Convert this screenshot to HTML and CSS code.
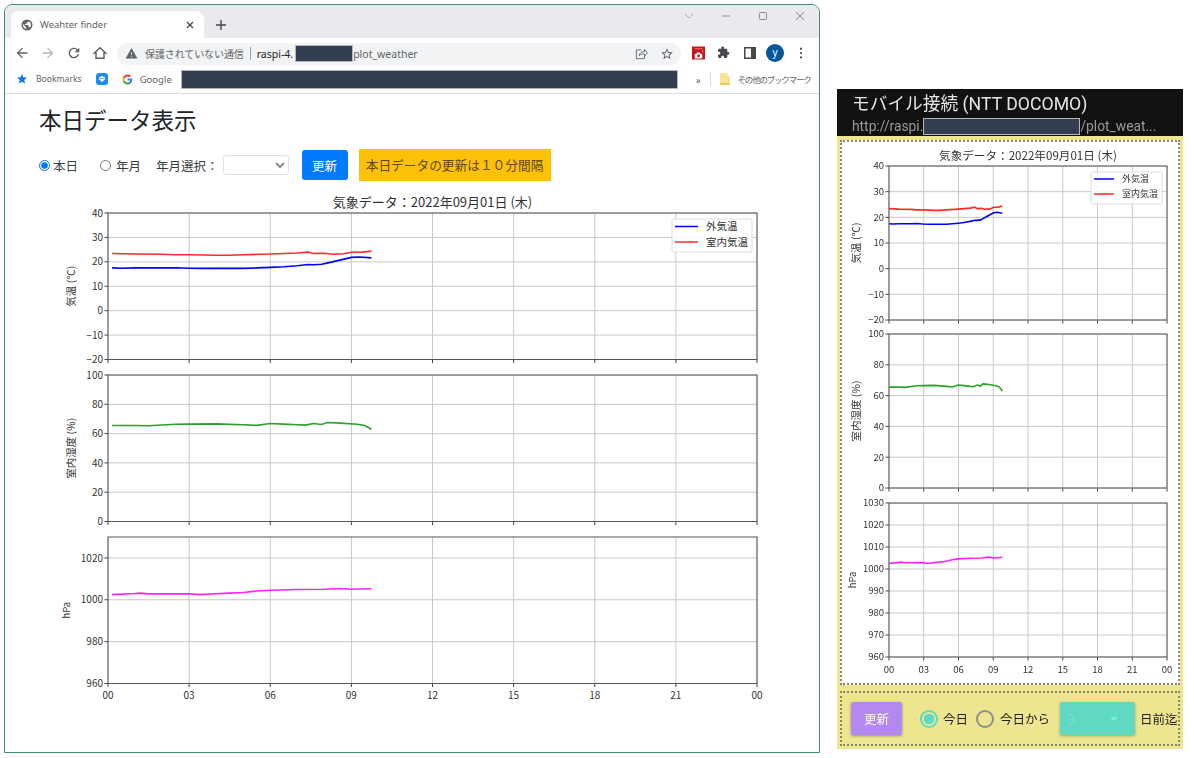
FILE: index.html
```html
<!DOCTYPE html>
<html lang="ja">
<head>
  <meta charset="UTF-8" />
  <meta name="viewport" content="width=device-width, initial-scale=1.0"/>
  <title>Weahter finder</title>
  <link rel="stylesheet" href="styles.css">
</head>
<body>
  <div class="screen">
    <div class="browser">
      <div class="tabstrip">
        <div class="tab">
          <svg class="favicon" viewBox="0 0 24 24"><path fill="#5f6368" d="M12 1a11 11 0 1 0 0 22 11 11 0 0 0 0-22zM4 12c0-.6.1-1.300.2-1.900L9 15v1c0 1.100.9 2 2 2v2c-3.900-.5-7-3.800-7-8zm13.900 5.400c-.3-.8-1-1.400-1.900-1.400h-1v-3c0-.6-.4-1-1-1H8v-2h2c.6 0 1-.4 1-1V7h2c1.100 0 2-.9 2-2v-.4c2.900 1.200 5 4 5 7.400 0 2.100-.8 4-2.100 5.400z"/></svg>
          <span class="tab-title">Weahter finder</span>
          <svg class="tab-close" viewBox="0 0 10 10"><path d="M2 2l6 6M8 2l-6 6" stroke="#45484c" stroke-width="1.300" fill="none"/></svg>
        </div>
        <svg class="new-tab" viewBox="0 0 12 12"><path d="M6 1v10M1 6h10" stroke="#45484c" stroke-width="1.400" fill="none"/></svg>
        <div class="win-controls">
          <svg viewBox="0 0 12 12"><path d="M2 4l4 4 4-4" stroke="#a8abb0" fill="none"/></svg>
          <svg viewBox="0 0 12 12"><path d="M2 6h8" stroke="#8a8d91" fill="none"/></svg>
          <svg viewBox="0 0 12 12"><rect x="2.500" y="2.500" width="7" height="7" rx="1" stroke="#8a8d91" fill="none"/></svg>
          <svg viewBox="0 0 12 12"><path d="M2 2l8 8M10 2l-8 8" stroke="#8a8d91" fill="none"/></svg>
        </div>
      </div>

      <div class="toolbar">
        <svg class="nav-icon" viewBox="0 0 24 24"><path fill="#5f6368" d="M20 11H7.830l5.590-5.590L12 4l-8 8 8 8 1.410-1.410L7.830 13H20v-2z"/></svg>
        <svg class="nav-icon" viewBox="0 0 24 24"><path fill="#b4b6b9" d="M4 11h12.170l-5.590-5.590L12 4l8 8-8 8-1.410-1.410L16.170 13H4v-2z"/></svg>
        <svg class="nav-icon" viewBox="0 0 24 24"><path fill="#5f6368" d="M17.650 6.350A7.958 7.958 0 0 0 12 4c-4.420 0-7.990 3.580-7.990 8s3.570 8 7.990 8c3.730 0 6.840-2.550 7.730-6h-2.080A5.990 5.990 0 0 1 12 18c-3.310 0-6-2.690-6-6s2.690-6 6-6c1.660 0 3.140.69 4.220 1.780L13 11h7V4l-2.350 2.350z"/></svg>
        <svg class="nav-icon" viewBox="0 0 24 24"><path fill="none" stroke="#5f6368" stroke-width="2.200" d="M12 4L3.500 12H6v8h12v-8h2.500z"/></svg>
        <div class="omnibox">
          <svg class="warn-icon" viewBox="0 0 24 24"><path fill="#5f6368" d="M1 21h22L12 2 1 21zm12-3h-2v-2h2v2zm0-4h-2v-4h2v4z"/></svg>
          <span class="not-secure">保護されていない通信</span>
          <span class="omni-sep"></span>
          <span class="host">raspi-4.</span>
          <span class="redact omni-redact"></span>
          <span class="path">plot_weather</span>
          <svg class="omni-icon omni-share" viewBox="0 0 24 24"><path fill="none" stroke="#6b6f74" stroke-width="1.700" d="M12 5H4v15h14v-5M9 15c0-5 4-7 9-7V4l5 6-5 6v-4c-4 0-7 0-9 3z"/></svg>
          <svg class="omni-icon omni-star" viewBox="0 0 24 24"><path fill="#5f6368" d="M22 9.240l-7.190-.620L12 2 9.190 8.630 2 9.240l5.460 4.730L5.820 21 12 17.270 18.180 21l-1.630-7.030L22 9.240zM12 15.400l-3.760 2.270 1-4.280-3.320-2.880 4.380-.380L12 6.100l1.710 4.040 4.380.380-3.320 2.880 1 4.280L12 15.400z"/></svg>
        </div>
        <svg class="ext-red" viewBox="0 0 14 14"><rect width="14" height="14" fill="#c3161f"/><path d="M3 2h8v1H3zM11 3h1v4h-1z" fill="#e8777c"/><path d="M3 8h1.500l1-1.500h3l1 1.500H11v5H3z" fill="#fff"/><circle cx="7" cy="10" r="1.500" fill="#c3161f"/></svg>
        <svg class="ext-piece" viewBox="0 0 24 24"><path fill="#45484c" d="M20.500 11H19V7c0-1.100-.9-2-2-2h-4V3.500C13 2.120 11.880 1 10.500 1S8 2.120 8 3.500V5H4c-1.100 0-1.990.9-1.990 2v3.800H3.500c1.490 0 2.700 1.210 2.700 2.700s-1.210 2.700-2.700 2.700H2V20c0 1.100.9 2 2 2h3.800v-1.500c0-1.490 1.210-2.700 2.700-2.700 1.490 0 2.700 1.210 2.700 2.700V22H17c1.100 0 2-.9 2-2v-4h1.500c1.380 0 2.500-1.120 2.500-2.500S21.880 11 20.500 11z"/></svg>
        <svg class="side-panel" viewBox="0 0 12 12"><rect x="0.750" y="0.750" width="10.500" height="10.500" fill="#fff" stroke="#45484c" stroke-width="1.500"/><rect x="7" y="1" width="4" height="10" fill="#45484c"/></svg>
        <div class="avatar">y</div>
        <svg class="menu-dots" viewBox="0 0 4 14"><circle cx="2" cy="2" r="1.300" fill="#45484c"/><circle cx="2" cy="7" r="1.300" fill="#45484c"/><circle cx="2" cy="12" r="1.300" fill="#45484c"/></svg>
      </div>

      <div class="bookmarks">
        <svg class="bm-star" viewBox="0 0 24 24"><path fill="#1a73e8" d="M12 17.270L18.180 21l-1.640-7.030L22 9.240l-7.190-.610L12 2 9.190 8.630 2 9.240l5.460 4.730L5.820 21z"/></svg>
        <span class="bm-text bm-first">Bookmarks</span>
        <svg class="bm-app" viewBox="0 0 12 12"><rect width="12" height="12" rx="3" fill="#1c8cf2"/><path d="M3 4.500L6 3l3 1.500v2L6 9 3 6.500z" fill="#fff"/><path d="M3.500 5.500h5" stroke="#1c8cf2" stroke-width=".7"/></svg>
        <svg class="bm-google" viewBox="0 0 24 24">
          <path fill="#4285F4" d="M22.560 12.250c0-.78-.07-1.530-.2-2.250H12v4.260h5.920c-.26 1.370-1.040 2.530-2.210 3.310v2.770h3.570c2.080-1.920 3.280-4.740 3.280-8.090z"/>
          <path fill="#34A853" d="M12 23c2.970 0 5.460-.98 7.280-2.660l-3.570-2.770c-.98.66-2.230 1.060-3.710 1.060-2.860 0-5.290-1.930-6.160-4.530H2.180v2.840C3.990 20.530 7.700 23 12 23z"/>
          <path fill="#FBBC05" d="M5.840 14.090c-.22-.66-.35-1.360-.35-2.090s.13-1.430.35-2.090V7.070H2.180C1.430 8.550 1 10.220 1 12s.43 3.450 1.180 4.930l2.850-2.220.81-.62z"/>
          <path fill="#EA4335" d="M12 5.380c1.620 0 3.060.56 4.210 1.640l3.150-3.150C17.450 2.090 14.970 1 12 1 7.700 1 3.990 3.470 2.180 7.070l3.660 2.840c.87-2.600 3.300-4.530 6.160-4.530z"/>
        </svg>
        <span class="bm-text">Google</span>
        <span class="redact bm-redact"></span>
        <span class="bm-more">»</span>
        <span class="bm-sep"></span>
        <svg class="bm-folder" viewBox="0 0 10 12"><path d="M0 1a1 1 0 0 1 1-1h5l4 4v7a1 1 0 0 1-1 1H1a1 1 0 0 1-1-1z" fill="#fde293"/><path d="M0 10h10v1a1 1 0 0 1-1 1H1a1 1 0 0 1-1-1z" fill="#f3c95c"/></svg>
        <span class="bm-text bm-other">その他のブックマーク</span>
      </div>

      <div class="page">
        <h1>本日データ表示</h1>
        <form class="controls">
          <label class="radio"><input type="radio" name="mode" checked>本日</label>
          <label class="radio radio-month"><input type="radio" name="mode">年月</label>
          <label class="month-label">年月選択：</label>
          <select class="month-select"></select>
          <button type="button" class="update-btn">更新</button>
          <div class="notice">本日データの更新は１０分間隔</div>
        </form>
        <svg id="desktopChart" class="chart chart-desktop" width="740" height="515"></svg>
      </div>
    </div>

    <div class="phone">
      <div class="phone-head">
        <div class="phone-title">モバイル接続 (NTT DOCOMO)</div>
        <div class="phone-url">http://raspi.<span class="redact url-redact"></span>/plot_weat...</div>
      </div>
      <div class="phone-body">
        <div class="phone-card">
          <svg id="mobileChart" class="chart" width="336" height="541"></svg>
        </div>
        <div class="phone-bar">
          <button type="button" class="m-btn">更新</button>
          <span class="m-radio m-radio-on"></span>
          <span class="m-label m-label-first">今日</span>
          <span class="m-radio m-radio-off"></span>
          <span class="m-label">今日から</span>
          <div class="m-select"><span>3</span><i></i></div>
          <span class="m-label m-days">日前迄</span>
        </div>
      </div>
    </div>
  </div>

  <script src="chart.js"></script>
</body>
</html>
```

FILE: styles.css
```css
* {
  box-sizing: border-box;
}

body {
  margin: 0;
  background: #fff;
  font-family: 'Noto Sans CJK JP', 'Liberation Sans', sans-serif;
  color: #212529;
}

svg {
  display: block;
  flex: none;
}

.screen {
  display: flex;
  align-items: flex-start;
  width: 1194px;
  height: 758px;
  overflow: hidden;
  filter: blur(0.35px);
}

.redact {
  display: inline-block;
  background: #333f50;
  border: 1px solid #b4b8bd;
}

/* browser window */
.browser {
  width: 816px;
  height: 749px;
  margin: 4px 0 0 4px;
  border: 1px solid #3f8a7d;
  border-radius: 8px 8px 0 0;
  overflow: hidden;
  background: #fff;
}

.tabstrip {
  display: flex;
  align-items: flex-end;
  height: 33px;
  padding-left: 6px;
  background: #e8eaed;
}

.tab {
  display: flex;
  align-items: center;
  width: 193px;
  height: 27px;
  padding: 0 9px 0 10px;
  background: #fff;
  border-radius: 8px 8px 0 0;
}

.favicon {
  width: 12px;
  height: 12px;
}

.tab-title {
  margin-left: 7px;
  font-family: 'Noto Sans', sans-serif;
  font-size: 9.500px;
  color: #5f6368;
}

.tab-close {
  width: 10px;
  height: 10px;
  margin-left: auto;
}

.new-tab {
  width: 12px;
  height: 12px;
  margin: 0 0 7px 11px;
}

.win-controls {
  display: flex;
  align-self: flex-start;
  gap: 25px;
  margin: 5px 0 0 auto;
  padding-right: 13px;
}

.win-controls svg {
  width: 12px;
  height: 12px;
}

.toolbar {
  display: flex;
  align-items: center;
  height: 29px;
  padding-left: 9px;
  gap: 10px;
}

.nav-icon {
  width: 16px;
  height: 16px;
}

.omnibox {
  display: flex;
  align-items: center;
  width: 564px;
  height: 22px;
  margin: 2px 0 0 -1px;
  padding: 0 7px 0 8px;
  background: #f1f3f4;
  border-radius: 11px;
  font-size: 10px;
  color: #5f6368;
}

.warn-icon {
  width: 13px;
  height: 13px;
}

.not-secure {
  margin-left: 7px;
  letter-spacing: -0.100px;
  white-space: nowrap;
}

.omni-sep {
  width: 1px;
  height: 13px;
  margin: 0 6px;
  background: #9aa0a6;
}

.host, .path {
  font-family: 'Noto Sans', sans-serif;
  font-size: 10.500px;
}

.host {
  color: #202124;
}

.omni-redact {
  width: 58px;
  height: 17px;
  margin-left: 2px;
}

.omni-icon {
  width: 14px;
  height: 14px;
}

.omni-share {
  margin-left: auto;
}

.omni-star {
  margin-left: 12px;
}

.ext-red {
  width: 13px;
  height: 14px;
  margin-left: 1px;
}

.ext-piece {
  width: 13px;
  height: 13px;
  margin-left: 2px;
}

.side-panel {
  width: 12px;
  height: 12px;
  margin-left: 3.500px;
}

.avatar {
  width: 18px;
  height: 18px;
  margin-left: 0.500px;
  border-radius: 50%;
  background: #01579b;
  color: #fff;
  font-family: 'Noto Sans', sans-serif;
  font-size: 10px;
  line-height: 17px;
  text-align: center;
}

.menu-dots {
  width: 4px;
  height: 12px;
  margin-left: 5px;
}

.bookmarks {
  display: flex;
  align-items: center;
  height: 27px;
  padding: 0 0 2px 11px;
  border-bottom: 1px solid #dadce0;
}

.bm-star {
  width: 12px;
  height: 12px;
}

.bm-text {
  font-family: 'Noto Sans', 'Noto Sans CJK JP', sans-serif;
  font-size: 9.500px;
  color: #5f6368;
  white-space: nowrap;
}

.bm-first {
  margin-left: 8px;
  font-size: 8.600px;
}

.bm-app {
  width: 12px;
  height: 12px;
  margin: 0 14px;
}

.bm-google {
  width: 11px;
  height: 11px;
  margin-right: 7px;
}

.bm-redact {
  width: 497px;
  height: 19px;
  margin-left: 9px;
}

.bm-more {
  margin-left: 18px;
  font-size: 10px;
  color: #45484c;
}

.bm-sep {
  width: 1px;
  height: 14px;
  margin-left: 9px;
  background: #d6d8da;
}

.bm-folder {
  width: 10px;
  height: 12px;
  margin-left: 9px;
}

.bm-other {
  margin-left: 8px;
  font-size: 8.500px;
  letter-spacing: -1.200px;
}

/* page content */
.page {
  padding: 0 0 0 34px;
}

h1 {
  margin: 0;
  padding-top: 8px;
  font-size: 22.500px;
  font-weight: 400;
  line-height: 34px;
}

.controls {
  display: flex;
  align-items: center;
  height: 32px;
  margin-top: 13px;
  font-size: 12.500px;
}

.radio {
  display: flex;
  align-items: center;
  color: #3a3f44;
}

.radio input {
  width: 11px;
  height: 11px;
  margin: 0 3px 0 0;
  accent-color: #007bff;
}

.radio-month {
  margin-left: 22px;
}

.radio-month input {
  margin-right: 5px;
}

.month-label {
  margin-left: 15px;
  color: #3a3f44;
}

.month-select {
  width: 66px;
  height: 20px;
  margin-left: 4px;
  background: #fff;
  border: 1px solid #dfe2e5;
  border-radius: 3px;
  color: #8a8d91;
}

.update-btn {
  width: 46px;
  height: 30px;
  margin-left: 13px;
  background-color: #007bff;
  border: none;
  border-radius: 3px;
  color: white;
  font-family: inherit;
  font-size: 12.500px;
}

.notice {
  width: 192px;
  height: 32px;
  margin-left: 11px;
  background: #ffc107;
  color: #5a4a12;
  font-size: 12.700px;
  line-height: 32px;
  text-align: center;
}

.chart text {
  fill: #333;
}

.chart-desktop {
  margin-top: 11px;
}

/* phone panel */
.phone {
  width: 346px;
  margin: 89px 0 0 17px;
}

.phone-head {
  height: 47px;
  padding: 2px 0 0 15px;
  background: #111;
  color: #e6e6e6;
}

.phone-title {
  font-family: Roboto, 'Noto Sans CJK JP', sans-serif;
  font-size: 17.700px;
  line-height: 26px;
  white-space: nowrap;
}

.phone-url {
  display: flex;
  align-items: center;
  font-family: Roboto, sans-serif;
  font-size: 13.800px;
  line-height: 18px;
  color: #9a9a9a;
  white-space: nowrap;
}

.url-redact {
  width: 157px;
  height: 17px;
}

.phone-body {
  height: 613px;
  padding: 4px 3px 0;
  background: #ede58f;
}

.phone-card {
  height: 545px;
  background: #fff;
  border: 2px dotted #8a8960;
}

.phone-bar {
  display: flex;
  align-items: center;
  height: 55px;
  margin-top: 6px;
  padding-left: 9px;
  border: 2px dotted #8a8960;
  font-size: 12.500px;
  white-space: nowrap;
}

.m-btn {
  width: 51px;
  height: 33px;
  background: #b388f0;
  border: none;
  border-radius: 2px;
  box-shadow: 0 1px 3px rgba(0,0,0,0.35);
  color: #fff;
  font-family: inherit;
  font-size: 12.500px;
}

.m-radio {
  width: 18px;
  height: 18px;
  border-radius: 50%;
  border: 2px solid #8f8f8f;
}

.m-radio-on {
  margin-left: 18px;
  border-color: #5fd9c4;
  background: radial-gradient(circle, #5fd9c4 0 5px, transparent 5.500px);
}

.m-radio-off {
  margin-left: 8px;
}

.m-label {
  margin-left: 6px;
  color: #222;
}

.m-label-first {
  margin-left: 5px;
}

.m-select {
  display: flex;
  align-items: center;
  justify-content: space-between;
  width: 75px;
  height: 33px;
  margin-left: 10px;
  padding: 0 17px 0 8px;
  background: #5fd9c4;
  border-radius: 2px;
  box-shadow: 0 1px 3px rgba(0,0,0,0.3);
  color: #6fe3cf;
  font-size: 14px;
}

.m-select i {
  border-left: 4px solid transparent;
  border-right: 4px solid transparent;
  border-top: 4px solid #8ae8d8;
}

.m-days {
  margin-left: 5px;
}
```

FILE: chart.js
```js
const temp = [[0.15,17.5],[0.5,17.4],[1,17.5],[2,17.5],[2.5,17.6],[3,17.4],[3.5,17.3],[5,17.3],[5.5,17.5],[6,17.7],[6.5,18],[7,18.4],[7.4,18.9],[7.6,18.8],[7.9,19],[8.1,19.5],[8.46,20.4],[9,21.8],[9.3,22],[9.74,21.6]];
const room = [[0.15,23.4],[1,23.2],[2,23.1],[2.5,22.9],[3,22.9],[4,22.7],[4.5,22.7],[5,22.9],[6,23.2],[6.5,23.4],[7,23.6],[7.4,24],[7.6,23.4],[8,23.5],[8.3,23.1],[8.7,23.3],[9,23.9],[9.4,24],[9.74,24.4]];
const humid = [[0.15,65.5],[1,65.5],[1.5,65.3],[2.5,66.4],[3,66.5],[4,66.6],[4.5,66.3],[5,66],[5.5,65.6],[6,66.9],[6.5,66.5],[7,66],[7.3,65.8],[7.6,66.9],[7.9,66.2],[8.1,67.6],[8.6,67.2],[9.2,66.4],[9.5,65.5],[9.74,63]];
const press = [[0.15,1002.5],[1,1003],[1.2,1003.2],[1.5,1002.8],[3,1002.9],[3.4,1002.5],[4,1002.9],[4.5,1003.2],[5,1003.5],[5.5,1004.2],[6,1004.6],[7,1004.9],[8,1005],[8.6,1005.4],[9,1005],[9.74,1005.3]];

const hours = ['00', '03', '06', '09', '12', '15', '18', '21', '00'];

function ticks(min, max, step) {
  const out = [];
  for (let v = min; v <= max; v += step) out.push(v);
  return out;
}

function drawPanel(c, p) {
  const bottom = p.top + p.height;
  const xPos = h => c.left + (h / 24) * (c.right - c.left);
  const yPos = v => bottom - ((v - p.min) / (p.max - p.min)) * p.height;
  let s = '';

  hours.forEach((_, i) => {
    const x = xPos(i * 3);
    s += `<line x1="${x}" x2="${x}" y1="${p.top}" y2="${bottom}" stroke="#c8c8c8"/>`;
    s += `<line x1="${x}" x2="${x}" y1="${bottom}" y2="${bottom + 3.5}" stroke="#444"/>`;
  });

  p.ticks.forEach(v => {
    const y = yPos(v);
    const label = String(v).replace('-', '−');
    s += `<line x1="${c.left}" x2="${c.right}" y1="${y}" y2="${y}" stroke="#c8c8c8"/>`;
    s += `<line x1="${c.left - 3.5}" x2="${c.left}" y1="${y}" y2="${y}" stroke="#444"/>`;
    s += `<text x="${c.left - 5}" y="${y + c.font * 0.36}" text-anchor="end" font-size="${c.font}">${label}</text>`;
  });

  p.lines.forEach(l => {
    const pts = l.data.map(d => xPos(d[0] * c.scale + c.shift).toFixed(1) + ',' + yPos(d[1]).toFixed(1)).join(' ');
    s += `<polyline points="${pts}" fill="none" stroke="${l.color}" stroke-width="1.600"/>`;
  });

  s += `<rect x="${c.left}" y="${p.top}" width="${c.right - c.left}" height="${p.height}" fill="none" stroke="#555"/>`;
  const cy = p.top + p.height / 2;
  s += `<text transform="translate(${p.labelX},${cy}) rotate(-90)" text-anchor="middle" font-size="${p.labelFont}">${p.label}</text>`;
  return s;
}

function drawChart(id, c) {
  let s = `<text x="${(c.left + c.right) / 2}" y="${c.titleY}" text-anchor="middle" font-size="${c.titleFont}">気象データ：2022年09月01日 (木)</text>`;
  c.panels.forEach(p => { s += drawPanel(c, p); });

  const lastBottom = c.panels[2].top + c.panels[2].height;
  hours.forEach((h, i) => {
    const x = c.left + (i / 8) * (c.right - c.left);
    s += `<text x="${x}" y="${lastBottom + c.font + c.xGap}" text-anchor="middle" font-size="${c.font}">${h}</text>`;
  });

  const g = c.legend;
  s += `<rect x="${g.x}" y="${g.y}" width="${g.w}" height="${g.h}" rx="2" fill="#fff" fill-opacity="0.8" stroke="#ddd"/>`;
  [['外気温', 'blue'], ['室内気温', '#ff2a2a']].forEach((item, i) => {
    const y = g.y + g.first + i * g.row;
    s += `<line x1="${g.x + 3}" x2="${g.x + 3 + g.line}" y1="${y}" y2="${y}" stroke="${item[1]}" stroke-width="1.500"/>`;
    s += `<text x="${g.x + g.text}" y="${y + g.font * 0.36}" font-size="${g.font}">${item[0]}</text>`;
  });

  document.getElementById(id).innerHTML = s;
}

function panels(tops, height, labelX, pressTicks, pressLabelX) {
  return [
    { top: tops[0], height, min: -20, max: 40, ticks: ticks(-20, 40, 10), label: '気温 (℃)', labelFont: 10.5, labelX,
      lines: [{ data: temp, color: 'blue' }, { data: room, color: '#ff2a2a' }] },
    { top: tops[1], height, min: 0, max: 100, ticks: ticks(0, 100, 20), label: '室内湿度 (%)', labelFont: 10.5, labelX,
      lines: [{ data: humid, color: '#2ca02c' }] },
    { top: tops[2], height, min: 960, max: 1030, ticks: pressTicks, label: 'hPa', labelFont: 9.5, labelX: pressLabelX,
      lines: [{ data: press, color: '#ff1fff' }] }
  ];
}

drawChart('desktopChart', {
  left: 69, right: 718, titleY: 15, titleFont: 13, font: 10, xGap: 5, scale: 1, shift: 0,
  panels: panels([21, 183, 345], 146.5, 36, ticks(960, 1020, 20), 31),
  legend: { x: 633, y: 27, w: 80, h: 33, first: 7.5, row: 15.5, line: 23, text: 34, font: 10.500 }
});

drawChart('mobileChart', {
  left: 47, right: 325, titleY: 18, titleFont: 11.600, font: 9.500, xGap: 6, scale: 1.02, shift: -0.15,
  panels: panels([24, 192, 361], 154, 18, ticks(960, 1030, 10), 14),
  legend: { x: 249, y: 30, w: 71, h: 32, first: 7, row: 15, line: 20, text: 31, font: 9 }
});
```
